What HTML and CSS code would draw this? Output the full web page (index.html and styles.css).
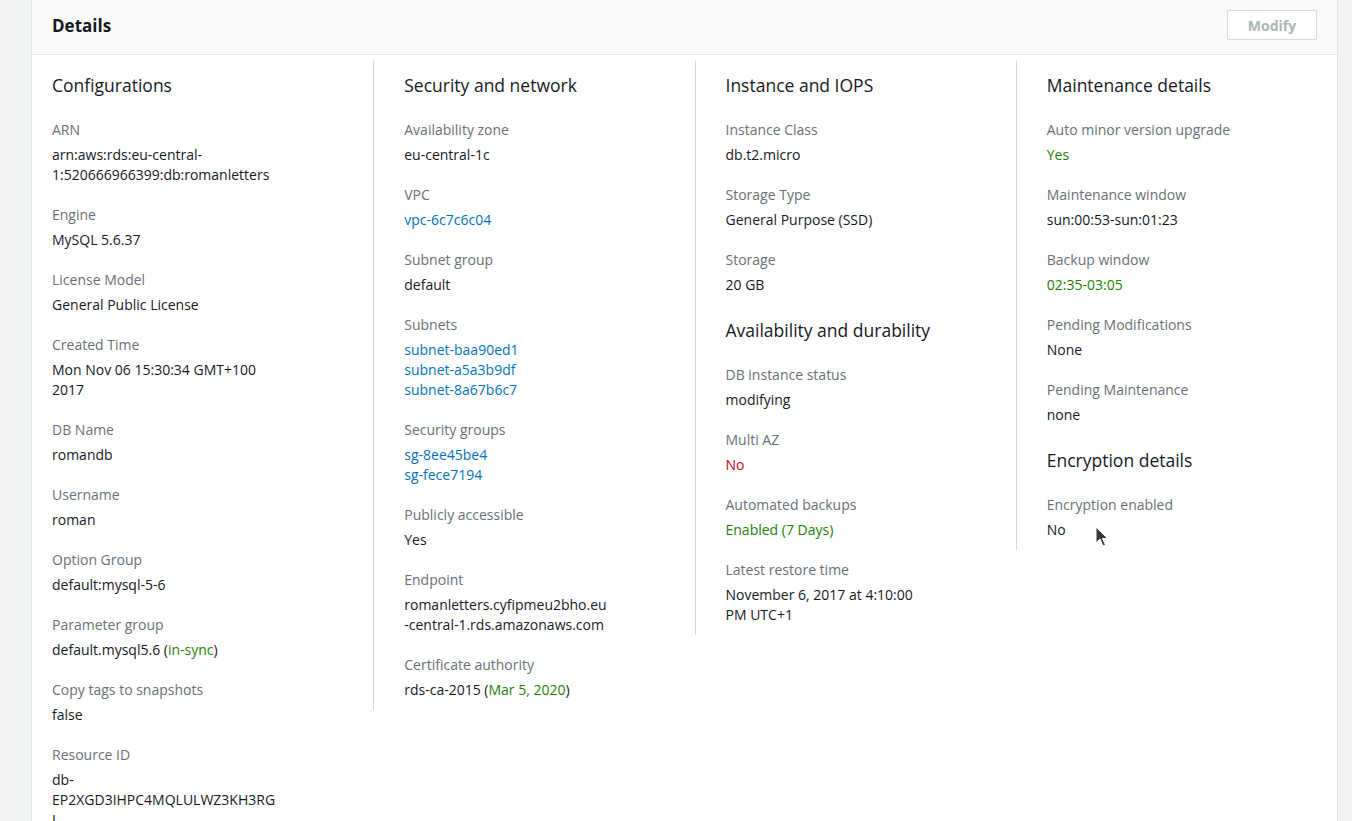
FILE: index.html
```html
<!DOCTYPE html>
<html lang="en">
<head>
<meta charset="utf-8">
<title>Details</title>
<link rel="stylesheet" href="styles.css">
</head>
<body>
<div class="page">
  <section class="panel">
    <header class="panel-header">
      <h2 class="panel-title">Details</h2>
      <button class="btn" disabled>Modify</button>
    </header>
    <div class="panel-body">
      <div class="col col-first">
        <h3 class="section-title">Configurations</h3>
        <div class="field"><div class="label">ARN</div><div class="value">arn:aws:rds:eu-central-1:520666966399:db:romanletters</div></div>
        <div class="field"><div class="label">Engine</div><div class="value">MySQL 5.6.37</div></div>
        <div class="field"><div class="label">License Model</div><div class="value">General Public License</div></div>
        <div class="field"><div class="label">Created Time</div><div class="value">Mon Nov 06 15:30:34 GMT+100 2017</div></div>
        <div class="field"><div class="label">DB Name</div><div class="value">romandb</div></div>
        <div class="field"><div class="label">Username</div><div class="value">roman</div></div>
        <div class="field"><div class="label">Option Group</div><div class="value">default:mysql-5-6</div></div>
        <div class="field"><div class="label">Parameter group</div><div class="value">default.mysql5.6 (<span class="ok">in-sync</span>)</div></div>
        <div class="field"><div class="label">Copy tags to snapshots</div><div class="value">false</div></div>
        <div class="field"><div class="label">Resource ID</div><div class="value">db-EP2XGD3IHPC4MQLULWZ3KH3RGL</div></div>
      </div>
      <div class="col">
        <h3 class="section-title">Security and network</h3>
        <div class="field"><div class="label">Availability zone</div><div class="value">eu-central-1c</div></div>
        <div class="field"><div class="label">VPC</div><div class="value"><a class="link" href="#">vpc-6c7c6c04</a></div></div>
        <div class="field"><div class="label">Subnet group</div><div class="value">default</div></div>
        <div class="field"><div class="label">Subnets</div>
          <div class="value"><a class="link" href="#">subnet-baa90ed1</a></div>
          <div class="value"><a class="link" href="#">subnet-a5a3b9df</a></div>
          <div class="value"><a class="link" href="#">subnet-8a67b6c7</a></div>
        </div>
        <div class="field"><div class="label">Security groups</div>
          <div class="value"><a class="link" href="#">sg-8ee45be4</a></div>
          <div class="value"><a class="link" href="#">sg-fece7194</a></div>
        </div>
        <div class="field"><div class="label">Publicly accessible</div><div class="value">Yes</div></div>
        <div class="field"><div class="label">Endpoint</div><div class="value break-all">romanletters.cyfipmeu2bho.eu-central-1.rds.amazonaws.com</div></div>
        <div class="field"><div class="label">Certificate authority</div><div class="value">rds-ca-2015 (<span class="ok">Mar 5, 2020</span>)</div></div>
      </div>
      <div class="col">
        <h3 class="section-title">Instance and IOPS</h3>
        <div class="field"><div class="label">Instance Class</div><div class="value">db.t2.micro</div></div>
        <div class="field"><div class="label">Storage Type</div><div class="value">General Purpose (SSD)</div></div>
        <div class="field"><div class="label">Storage</div><div class="value">20 GB</div></div>
        <h3 class="section-title">Availability and durability</h3>
        <div class="field"><div class="label">DB instance status</div><div class="value">modifying</div></div>
        <div class="field"><div class="label">Multi AZ</div><div class="value bad">No</div></div>
        <div class="field"><div class="label">Automated backups</div><div class="value ok">Enabled (7 Days)</div></div>
        <div class="field"><div class="label">Latest restore time</div><div class="value">November 6, 2017 at 4:10:00 PM UTC+1</div></div>
      </div>
      <div class="col">
        <h3 class="section-title">Maintenance details</h3>
        <div class="field"><div class="label">Auto minor version upgrade</div><div class="value ok">Yes</div></div>
        <div class="field"><div class="label">Maintenance window</div><div class="value">sun:00:53-sun:01:23</div></div>
        <div class="field"><div class="label">Backup window</div><div class="value ok">02:35-03:05</div></div>
        <div class="field"><div class="label">Pending Modifications</div><div class="value">None</div></div>
        <div class="field"><div class="label">Pending Maintenance</div><div class="value">none</div></div>
        <h3 class="section-title">Encryption details</h3>
        <div class="field"><div class="label">Encryption enabled</div><div class="value">No</div></div>
      </div>
    </div>
  </section>
</div>
<svg class="cursor" width="14" height="22" viewBox="0 0 14 22" aria-hidden="true">
  <path d="M1 1 L1 17 L5 13 L8 20 L10.5 19 L7.5 12.5 L12.5 12.5 Z" fill="#3a3a3a" stroke="#ffffff" stroke-width="1"/>
</svg>
</body>
</html>
```

FILE: styles.css
```css
* { box-sizing: border-box; }

html, body {
  margin: 0;
  padding: 0;
}

body {
  background: #f2f3f3;
  font-family: "Open Sans", "Noto Sans", Arial, sans-serif;
  color: #16191f;
  overflow: hidden;
}

.page {
  padding: 0 14px 0 31px;
}

.panel {
  background: #ffffff;
  border: 1px solid #e1e4e4;
  border-top: none;
  min-height: 900px;
}

.panel-header {
  display: flex;
  justify-content: space-between;
  align-items: flex-start;
  height: 55px;
  padding: 10px 20px 0 20px;
  background: #fafafa;
  border-bottom: 1px solid #e6e9e9;
}

.panel-title {
  margin: 0;
  font-size: 17px;
  line-height: 31px;
  font-weight: 700;
  color: #16191f;
}

.btn {
  width: 90px;
  height: 30px;
  margin: 0;
  padding: 0;
  background: #ffffff;
  border: 1px solid #d5dbdb;
  border-radius: 2px;
  font-family: inherit;
  font-size: 14px;
  font-weight: 700;
  color: #aab7b8;
}

.panel-body {
  display: grid;
  grid-template-columns: repeat(4, minmax(0, 1fr));
  align-items: start;
  padding: 5px 0 20px 20px;
}

.col {
  padding: 10px 86px 10px 30px;
  border-left: 1px solid #d5dbdb;
}

.col-first {
  padding: 10px 93px 10px 0;
  border-left: none;
}

.section-title {
  margin: 0 0 20px 0;
  font-size: 17.5px;
  line-height: 30px;
  font-weight: 400;
  color: #16191f;
  white-space: nowrap;
}

.field {
  margin-bottom: 20px;
}

.field:last-child {
  margin-bottom: 0;
}

.label {
  font-size: 14px;
  line-height: 20px;
  color: #687078;
  margin-bottom: 5px;
}

.value {
  font-size: 14px;
  line-height: 20px;
  color: #16191f;
  overflow-wrap: anywhere;
}

.break-all {
  word-break: break-all;
}

.link {
  color: #0073bb;
  text-decoration: none;
}

.ok {
  color: #1d8102;
}

.bad {
  color: #d0021b;
}

.cursor {
  position: absolute;
  left: 1095px;
  top: 526px;
}
```
